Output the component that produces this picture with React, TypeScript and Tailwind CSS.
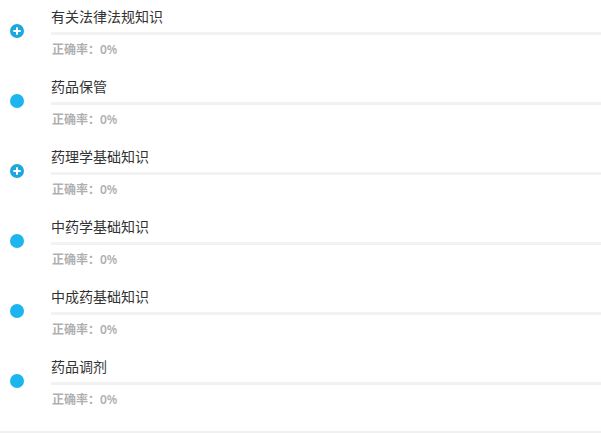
import React from "react";

const items = [
  { name: "有关法律法规知识", plus: true },
  { name: "药品保管", plus: false },
  { name: "药理学基础知识", plus: true },
  { name: "中药学基础知识", plus: false },
  { name: "中成药基础知识", plus: false },
  { name: "药品调剂", plus: false },
];

function Icon({ plus }: { plus: boolean }) {
  if (plus) {
    return (
      <svg width="14" height="14" viewBox="0 0 14 14">
        <circle cx="7" cy="7" r="7" fill="#1ea7de" />
        <rect x="3.3" y="6" width="7.4" height="2" fill="#fff" />
        <rect x="6" y="3.3" width="2" height="7.4" fill="#fff" />
      </svg>
    );
  }
  return <div className="w-[14px] h-[14px] rounded-full bg-[#1cb5ee]" />;
}

export default function App() {
  return (
    <div
      className="w-[601px] h-[433px] bg-white overflow-hidden"
      style={{ fontFamily: '"Noto Sans", "Noto Sans CJK SC", sans-serif' }}
    >
      <div className="flex flex-col">
        {items.map((it) => (
          <div key={it.name} className="flex h-[70px]">
            <div className="w-[51px] shrink-0 pl-[10px] pt-[24px]">
              <Icon plus={it.plus} />
            </div>
            <div className="flex-1 flex flex-col pt-[7px]">
              <div className="text-[14px] leading-[20px] text-[#333333]">{it.name}</div>
              <div className="mt-[5px] h-[3px] bg-[#f2f2f2]" />
              <div className="mt-[6px] pl-px text-[12px] leading-[18px] font-semibold text-[#b0b0b0]">
                正确率：0%
              </div>
            </div>
          </div>
        ))}
      </div>
      <div className="mt-[11px] h-[2px] bg-[#f0f0f0]" />
    </div>
  );
}
